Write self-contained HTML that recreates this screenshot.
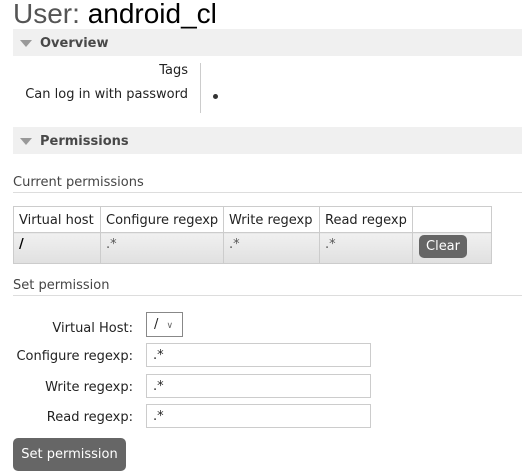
<!DOCTYPE html><html><head><style>
*{margin:0;padding:0;box-sizing:border-box}
body{width:522px;height:474px;background:#fff;font-family:"DejaVu Sans",Verdana,sans-serif;font-size:13px;color:#444;position:relative;overflow:hidden}
.a{position:absolute;white-space:nowrap}
.bar{position:absolute;left:13px;right:0;height:27px;background:#f0f0f0;font-weight:bold;color:#484848;font-size:13px;line-height:29px;padding-left:27px}
.bar:before{content:"";position:absolute;left:7px;top:11px;border-left:6px solid transparent;border-right:6px solid transparent;border-top:7px solid #999}
.line{position:absolute;left:13px;right:0;height:1px;background:#ddd}
table{position:absolute;left:13px;top:206px;border-collapse:collapse;table-layout:fixed;width:478px}
td{border:1px solid #ccc;padding:0 5px;color:#222;height:26px;white-space:nowrap;overflow:hidden;padding-top:2px}
tr.b td{background:linear-gradient(#f0f0f0,#e0e0e0);height:31px;vertical-align:top;padding-top:4px;color:#555}
.btn{background:#666;color:#fff;border-radius:5px;position:absolute}
.lab{position:absolute;right:389px;text-align:right;color:#222;white-space:nowrap}
.in{position:absolute;left:146px;width:225px;height:24px;border:1px solid #ccc;padding-left:6px;line-height:24px;color:#222}
</style></head><body>
<div class="a" style="left:13px;top:-2px;font-size:28px;font-family:'Liberation Sans',sans-serif;color:#555">User: <span style="color:#000">android_cl</span></div>
<div class="bar" style="top:29px">Overview</div>
<div class="a" style="right:334px;top:63px;color:#222">Tags</div>
<div class="a" style="right:334px;top:87px;color:#222">Can log in with password</div>
<div class="a" style="left:200px;top:63px;width:1px;height:50px;background:#ccc"></div>
<div class="a" style="left:213px;top:94px;width:5px;height:5px;border-radius:50%;background:#333"></div>
<div class="bar" style="top:127px">Permissions</div>
<div class="a" style="left:13px;top:175px">Current permissions</div>
<div class="line" style="top:192px"></div>
<table><colgroup><col style="width:87px"><col style="width:123px"><col style="width:96px"><col style="width:93px"><col style="width:79px"></colgroup>
<tr><td>Virtual host</td><td>Configure regexp</td><td>Write regexp</td><td>Read regexp</td><td></td></tr>
<tr class="b"><td style="font-weight:bold;color:#000">/</td><td>.*</td><td>.*</td><td>.*</td><td></td></tr></table>
<div class="btn" style="left:419px;top:235px;width:48px;height:23px;line-height:23px;text-align:center;font-size:13px">Clear</div>
<div class="a" style="left:13px;top:278px">Set permission</div>
<div class="line" style="top:295px"></div>
<div class="lab" style="top:321px">Virtual Host:</div>
<div class="a" style="left:146px;top:312px;width:37px;height:25px;border:1px solid #888;color:#222;padding-left:7px;line-height:23px">/ <span style="font-size:9px;color:#666;margin-left:4px">&#x2228;</span></div>
<div class="lab" style="top:349px">Configure regexp:</div>
<div class="in" style="top:343px">.*</div>
<div class="lab" style="top:380px">Write regexp:</div>
<div class="in" style="top:374px">.*</div>
<div class="lab" style="top:410px">Read regexp:</div>
<div class="in" style="top:404px">.*</div>
<div class="btn" style="left:13px;top:438px;width:113px;height:33px;line-height:34px;text-align:center;font-size:13px">Set permission</div>
</body></html>
